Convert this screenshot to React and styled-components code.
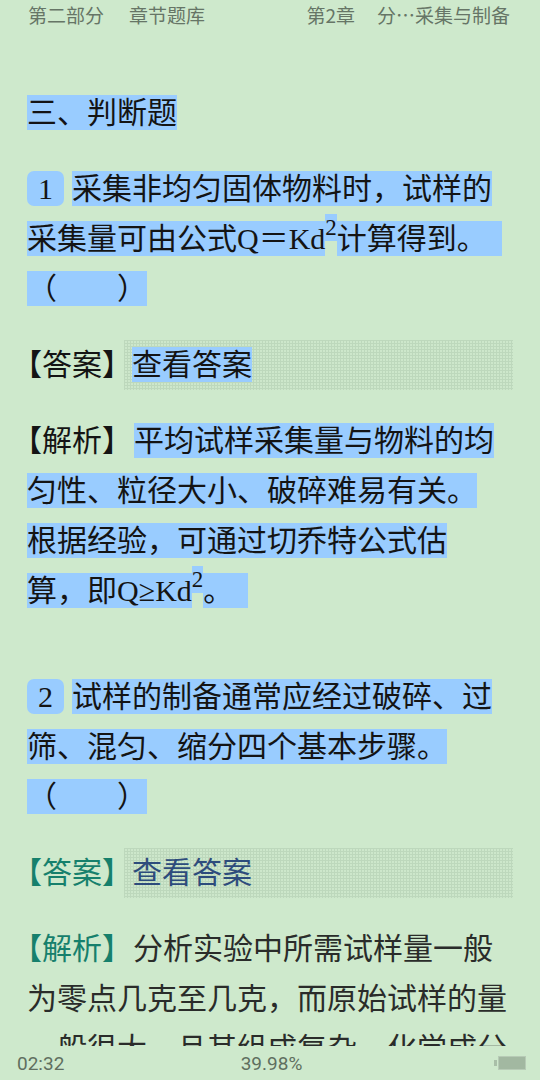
import React from "react";
import styled, { createGlobalStyle } from "styled-components";

const GlobalStyle = createGlobalStyle`
  html, body {
    margin: 0;
    padding: 0;
    background: #cee9cc;
  }
`;

const Page = styled.div`
  width: 540px;
  height: 1080px;
  display: flex;
  flex-direction: column;
  overflow: hidden;
  background: #cee9cc;
`;

const Header = styled.div`
  height: 28px;
  flex: none;
  display: flex;
  align-items: center;
  justify-content: space-between;
  padding: 0 30px 0 28px;
  font-family: "Noto Sans CJK SC", "Noto Sans", sans-serif;
  font-size: 19px;
  color: #667566;
`;

const HeaderGroup = styled.div`
  display: flex;
  gap: ${({ gap }) => gap}px;
  white-space: nowrap;
`;

const Content = styled.div`
  flex: 1;
  min-height: 0;
  overflow: hidden;
  padding: 60px 27px 0;
  font-family: "Liberation Serif", "Noto Sans CJK SC", serif;
  font-size: 30px;
  line-height: 50px;
  color: #141414;
`;

const Title = styled.p`
  margin: 0 0 26px;
`;

const Group = styled.div`
  display: flex;
  flex-direction: column;
  gap: 26px;
  & + & {
    margin-top: 56px;
  }
`;

const Para = styled.p`
  margin: 0;
  color: ${({ muted }) => (muted ? "#2a2c2a" : "#141414")};
`;

const Hl = styled.span`
  background: #99ccff;
  padding: 1px 0;
  -webkit-box-decoration-break: clone;
  box-decoration-break: clone;
`;

const Sup = styled.sup`
  font-size: 23px;
  line-height: 0;
  vertical-align: 14px;
`;

const Badge = styled.span`
  display: inline-block;
  vertical-align: top;
  margin: 7px 8px 0 0;
  width: 37px;
  height: 35px;
  line-height: 35px;
  border-radius: 7px;
  background: #99ccff;
  text-align: center;
`;

const Label = styled.span`
  font-feature-settings: "halt" 1;
  color: ${({ color }) => color || "#141414"};
  margin-right: ${({ space }) => space}px;
  white-space: nowrap;
`;

const AnswerRow = styled.div`
  display: flex;
  align-items: stretch;
`;

const AnswerBox = styled.div`
  flex: 1;
  height: 50px;
  padding-left: 8px;
  background-color: #cde7cb;
  background-image: linear-gradient(90deg, #bdd8bc 1px, transparent 1px),
    linear-gradient(#bdd8bc 1px, transparent 1px);
  background-size: 3px 3px;
  color: ${({ color }) => color || "#141414"};
`;

const Footer = styled.div`
  height: 34px;
  flex: none;
  display: grid;
  grid-template-columns: 1fr auto 1fr;
  align-items: center;
  padding: 0 14px 0 17px;
  font-family: Roboto, "Noto Sans", sans-serif;
  font-size: 19px;
  color: #5f6f5f;
`;

const BatteryWrap = styled.div`
  justify-self: end;
  display: flex;
  align-items: center;
`;

function Battery() {
  return (
    <BatteryWrap>
      <svg width="32" height="14" viewBox="0 0 32 14">
        <rect x="0" y="4" width="3" height="6" fill="#a9bfa8" />
        <rect x="4.5" y="0.5" width="27" height="13" fill="#a2b8a1" stroke="#b7cbb6" />
      </svg>
    </BatteryWrap>
  );
}

function Answer({ selected }) {
  return (
    <AnswerRow>
      <Label space={7} color={selected ? "#141414" : "#16806c"}>
        【答案】
      </Label>
      <AnswerBox color={selected ? "#141414" : "#2d4c7c"}>
        {selected ? <Hl>查看答案</Hl> : "查看答案"}
      </AnswerBox>
    </AnswerRow>
  );
}

export default function App() {
  return (
    <Page>
      <GlobalStyle />
      <Header>
        <HeaderGroup gap={25}>
          <span>第二部分</span>
          <span>章节题库</span>
        </HeaderGroup>
        <HeaderGroup gap={22}>
          <span>第2章</span>
          <span>分…采集与制备</span>
        </HeaderGroup>
      </Header>

      <Content>
        <Title>
          <Hl>三、判断题</Hl>
        </Title>

        <Group>
          <Para>
            <Badge>1</Badge>
            <Hl>采集非均匀固体物料时，试样的采集量可由公式Q＝Kd</Hl>
            <Sup>
              <Hl>2</Hl>
            </Sup>
            <Hl>计算得到。{"\u2002"}</Hl>
            <br />
            <Hl>（　　）</Hl>
          </Para>
          <Answer selected />
          <Para>
            <Label space={17}>【解析】</Label>
            <Hl>
              平均试样采集量与物料的均
              <br />
              匀性、粒径大小、破碎难易有关。
              <br />
              根据经验，可通过切乔特公式估
              <br />
              算，即Q≥Kd
            </Hl>
            <Sup>
              <Hl>2</Hl>
            </Sup>
            <Hl>。{"\u2002"}</Hl>
          </Para>
        </Group>

        <Group>
          <Para>
            <Badge>2</Badge>
            <Hl>试样的制备通常应经过破碎、过筛、混匀、缩分四个基本步骤。</Hl>
            <br />
            <Hl>（　　）</Hl>
          </Para>
          <Answer />
          <Para muted>
            <Label space={16} color="#16806c">
              【解析】
            </Label>
            分析实验中所需试样量一般
            <br />
            为零点几克至几克，而原始试样的量
            <br />
            一般很大，且其组成复杂，化学成分
            <br />
            也不均匀。
          </Para>
        </Group>
      </Content>

      <Footer>
        <span>02:32</span>
        <span>39.98%</span>
        <Battery />
      </Footer>
    </Page>
  );
}
